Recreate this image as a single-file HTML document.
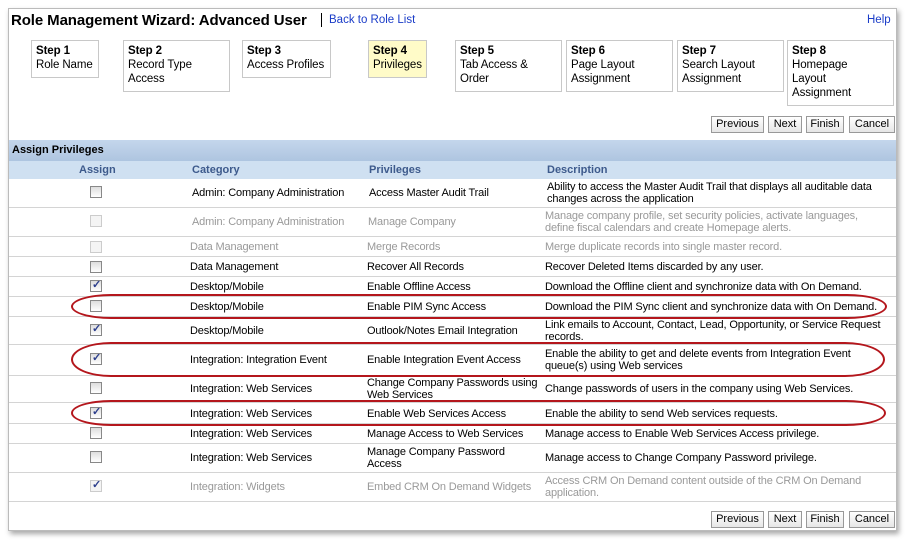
<!DOCTYPE html>
<html><head><meta charset="utf-8"><style>
*{margin:0;padding:0;box-sizing:border-box}
body{width:908px;height:540px;background:#fff;font-family:"Liberation Sans",Tahoma,sans-serif;font-size:11px;color:#000;position:relative;overflow:hidden}
.panel{position:absolute;left:8px;top:8px;width:889px;height:523px;background:#fff;border:1px solid #bbb;box-shadow:2px 3px 5px rgba(0,0,0,.35)}
.a{position:absolute;white-space:nowrap}
.step{position:absolute;border:1px solid #c8c8c8;padding:3px 4px;line-height:14px;font-size:11.5px;background:#fff;white-space:nowrap;letter-spacing:-0.1px}
.btn{position:absolute;height:17px;border:1px solid #999;background:linear-gradient(#fff,#e6e6e6);font-size:11px;line-height:15px;text-align:center}
.row{position:absolute;left:9px;width:887px;border-bottom:1px solid #d4d4d4}
.cb{position:absolute;left:90px;width:12px;height:12px;border:1px solid #888;background:linear-gradient(#ddd,#fff)}
.cb.d{border-color:#ccc;background:#f4f4f4}
.cb.c::after{content:"✓";position:absolute;left:1px;top:-3px;font-size:11px;color:#2c3e8c;font-weight:bold}
.t{position:absolute;line-height:12px;font-size:11px;white-space:nowrap;letter-spacing:-0.15px}
.g{color:#999}
.oval{position:absolute;border:2px solid #b4161c;border-radius:40px/50%}
</style></head><body>
<div class="panel"></div>
<div class="a" style="left:11px;top:12px;font-size:15px;font-weight:bold;letter-spacing:-0.1px">Role Management Wizard: Advanced User</div>
<div class="a" style="left:321px;top:13px;width:1px;height:14px;background:#000"></div>
<div class="a" style="left:329px;top:14px;font-size:11.5px;color:#1a3cc8">Back to Role List</div>
<div class="a" style="left:867px;top:14px;font-size:11.5px;color:#1a3cc8">Help</div>

<div class="step" style="left:31px;top:40px;width:68px;height:38px"><b>Step 1</b><br>Role Name</div>
<div class="step" style="left:123px;top:40px;width:107px;height:52px"><b>Step 2</b><br>Record Type<br>Access</div>
<div class="step" style="left:242px;top:40px;width:89px;height:38px"><b>Step 3</b><br>Access Profiles</div>
<div class="step" style="left:368px;top:40px;width:59px;height:38px;background:#fffbc8"><b>Step 4</b><br>Privileges</div>
<div class="step" style="left:455px;top:40px;width:107px;height:52px"><b>Step 5</b><br>Tab Access &amp;<br>Order</div>
<div class="step" style="left:566px;top:40px;width:107px;height:52px"><b>Step 6</b><br>Page Layout<br>Assignment</div>
<div class="step" style="left:677px;top:40px;width:107px;height:52px"><b>Step 7</b><br>Search Layout<br>Assignment</div>
<div class="step" style="left:787px;top:40px;width:107px;height:66px"><b>Step 8</b><br>Homepage<br>Layout<br>Assignment</div>

<div class="btn" style="left:711px;top:116px;width:53px">Previous</div>
<div class="btn" style="left:768px;top:116px;width:34px">Next</div>
<div class="btn" style="left:806px;top:116px;width:38px">Finish</div>
<div class="btn" style="left:849px;top:116px;width:46px">Cancel</div>

<div class="a" style="left:9px;top:140px;width:887px;height:21px;background:linear-gradient(#c4d6ec,#aec5e0)"></div>
<div class="a" style="left:12px;top:144px;font-weight:bold;font-size:11px">Assign Privileges</div>
<div class="a" style="left:9px;top:161px;width:887px;height:18px;background:#cfe0f1"></div>
<div class="a" style="left:79px;top:164px;font-weight:bold;color:#3d5a8c">Assign</div>
<div class="a" style="left:192px;top:164px;font-weight:bold;color:#3d5a8c">Category</div>
<div class="a" style="left:369px;top:164px;font-weight:bold;color:#3d5a8c">Privileges</div>
<div class="a" style="left:547px;top:164px;font-weight:bold;color:#3d5a8c">Description</div>

<div class="row" style="top:179px;height:29px"></div>
<div class="cb" style="top:186px"></div>
<div class="t" style="left:192px;top:187px">Admin: Company Administration</div>
<div class="t" style="left:369px;top:187px">Access Master Audit Trail</div>
<div class="t" style="left:547px;top:181px">Ability to access the Master Audit Trail that displays all auditable data<br>changes across the application</div>

<div class="row" style="top:208px;height:29px"></div>
<div class="cb d" style="top:215px"></div>
<div class="t g" style="left:192px;top:216px">Admin: Company Administration</div>
<div class="t g" style="left:368px;top:216px">Manage Company</div>
<div class="t g" style="left:545px;top:210px">Manage company profile, set security policies, activate languages,<br>define fiscal calendars and create Homepage alerts.</div>

<div class="row" style="top:237px;height:20px"></div>
<div class="cb d" style="top:241px"></div>
<div class="t g" style="left:190px;top:241px">Data Management</div>
<div class="t g" style="left:367px;top:241px">Merge Records</div>
<div class="t g" style="left:545px;top:241px">Merge duplicate records into single master record.</div>

<div class="row" style="top:257px;height:20px"></div>
<div class="cb" style="top:261px"></div>
<div class="t" style="left:190px;top:261px">Data Management</div>
<div class="t" style="left:367px;top:261px">Recover All Records</div>
<div class="t" style="left:545px;top:261px">Recover Deleted Items discarded by any user.</div>

<div class="row" style="top:277px;height:20px"></div>
<div class="cb c" style="top:280px"></div>
<div class="t" style="left:190px;top:281px">Desktop/Mobile</div>
<div class="t" style="left:367px;top:281px">Enable Offline Access</div>
<div class="t" style="left:545px;top:281px">Download the Offline client and synchronize data with On Demand.</div>

<div class="row" style="top:297px;height:20px"></div>
<div class="cb" style="top:300px"></div>
<div class="t" style="left:190px;top:301px">Desktop/Mobile</div>
<div class="t" style="left:367px;top:301px">Enable PIM Sync Access</div>
<div class="t" style="left:545px;top:301px">Download the PIM Sync client and synchronize data with On Demand.</div>

<div class="row" style="top:317px;height:28px"></div>
<div class="cb c" style="top:324px"></div>
<div class="t" style="left:190px;top:325px">Desktop/Mobile</div>
<div class="t" style="left:367px;top:325px">Outlook/Notes Email Integration</div>
<div class="t" style="left:545px;top:319px">Link emails to Account, Contact, Lead, Opportunity, or Service Request<br>records.</div>

<div class="row" style="top:345px;height:31px"></div>
<div class="cb c" style="top:353px"></div>
<div class="t" style="left:190px;top:354px">Integration: Integration Event</div>
<div class="t" style="left:367px;top:354px">Enable Integration Event Access</div>
<div class="t" style="left:545px;top:348px">Enable the ability to get and delete events from Integration Event<br>queue(s) using Web services</div>

<div class="row" style="top:376px;height:27px"></div>
<div class="cb" style="top:382px"></div>
<div class="t" style="left:190px;top:383px">Integration: Web Services</div>
<div class="t" style="left:367px;top:377px">Change Company Passwords using<br>Web Services</div>
<div class="t" style="left:545px;top:383px">Change passwords of users in the company using Web Services.</div>

<div class="row" style="top:403px;height:21px"></div>
<div class="cb c" style="top:407px"></div>
<div class="t" style="left:190px;top:408px">Integration: Web Services</div>
<div class="t" style="left:367px;top:408px">Enable Web Services Access</div>
<div class="t" style="left:545px;top:408px">Enable the ability to send Web services requests.</div>

<div class="row" style="top:424px;height:20px"></div>
<div class="cb" style="top:427px"></div>
<div class="t" style="left:190px;top:428px">Integration: Web Services</div>
<div class="t" style="left:367px;top:428px">Manage Access to Web Services</div>
<div class="t" style="left:545px;top:428px">Manage access to Enable Web Services Access privilege.</div>

<div class="row" style="top:444px;height:29px"></div>
<div class="cb" style="top:451px"></div>
<div class="t" style="left:190px;top:452px">Integration: Web Services</div>
<div class="t" style="left:367px;top:446px">Manage Company Password<br>Access</div>
<div class="t" style="left:545px;top:452px">Manage access to Change Company Password privilege.</div>

<div class="row" style="top:473px;height:29px"></div>
<div class="cb d c" style="top:480px"></div>
<div class="t g" style="left:190px;top:481px">Integration: Widgets</div>
<div class="t g" style="left:367px;top:481px">Embed CRM On Demand Widgets</div>
<div class="t g" style="left:545px;top:475px">Access CRM On Demand content outside of the CRM On Demand<br>application.</div>

<div class="btn" style="left:711px;top:511px;width:53px">Previous</div>
<div class="btn" style="left:768px;top:511px;width:34px">Next</div>
<div class="btn" style="left:806px;top:511px;width:38px">Finish</div>
<div class="btn" style="left:849px;top:511px;width:46px">Cancel</div>

<div class="oval" style="left:71px;top:294px;width:816px;height:25px"></div>
<div class="oval" style="left:71px;top:342px;width:814px;height:35px"></div>
<div class="oval" style="left:71px;top:400px;width:815px;height:26px"></div>
</body></html>
